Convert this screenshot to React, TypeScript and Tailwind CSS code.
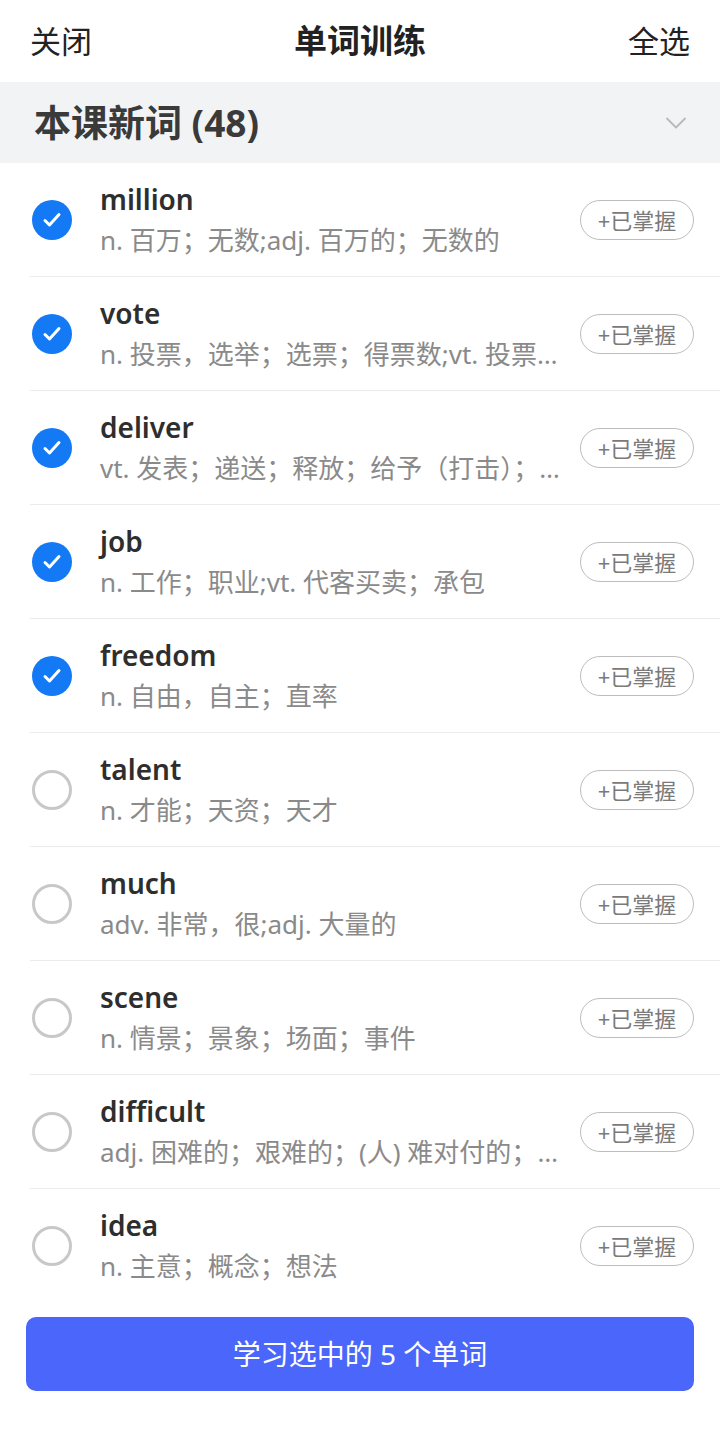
import { ChevronDown } from "lucide-react";

const words = [
  { word: "million", meaning: "n. 百万；无数;adj. 百万的；无数的", checked: true },
  { word: "vote", meaning: "n. 投票，选举；选票；得票数;vt. 投票决定；提议", checked: true },
  { word: "deliver", meaning: "vt. 发表；递送；释放；给予（打击）；接生", checked: true },
  { word: "job", meaning: "n. 工作；职业;vt. 代客买卖；承包", checked: true },
  { word: "freedom", meaning: "n. 自由，自主；直率", checked: true },
  { word: "talent", meaning: "n. 才能；天资；天才", checked: false },
  { word: "much", meaning: "adv. 非常，很;adj. 大量的", checked: false },
  { word: "scene", meaning: "n. 情景；景象；场面；事件", checked: false },
  { word: "difficult", meaning: "adj. 困难的；艰难的；(人) 难对付的；执拗的", checked: false },
  { word: "idea", meaning: "n. 主意；概念；想法", checked: false },
];

function CheckCircle({ checked }: { checked: boolean }) {
  if (!checked) {
    return <div className="w-10 h-10 rounded-full border-[3px] border-[#c8c8c8] shrink-0" />;
  }
  return (
    <div className="w-10 h-10 rounded-full bg-[#1479f5] flex items-center justify-center shrink-0">
      <svg width="24" height="24" viewBox="0 0 24 24" fill="none" stroke="white" strokeWidth="3" strokeLinecap="round" strokeLinejoin="round">
        <path d="M5 12.5l4.5 4.5L19 6.5" />
      </svg>
    </div>
  );
}

export default function App() {
  const selected = words.filter((w) => w.checked).length;

  return (
    <div
      className="w-[720px] h-[1430px] bg-white flex flex-col"
      style={{ fontFamily: '"Noto Sans", "Noto Sans CJK SC", sans-serif' }}
    >
      <div className="h-[82px] flex items-center justify-between px-[30px] text-[#222]">
        <span className="text-[31px]">关闭</span>
        <span className="text-[33px] font-bold">单词训练</span>
        <span className="text-[31px]">全选</span>
      </div>

      <div className="h-[81px] bg-[#f2f3f5] flex items-center justify-between pl-[34px] pr-[26px]">
        <span className="text-[37px] font-bold text-[#3a3a3a]">本课新词 (48)</span>
        <ChevronDown size={36} strokeWidth={1.2} className="text-[#b8b8b8]" />
      </div>

      <div className="flex flex-col">
        {words.map((w, i) => (
          <div key={w.word} className="flex items-center h-[114px] pl-[32px] pr-[26px] relative">
            <CheckCircle checked={w.checked} />
            <div className="flex-1 min-w-0 ml-[28px] mr-[12px] flex flex-col">
              <span className="text-[28px] font-semibold text-[#2e2e2e] leading-[34px]">{w.word}</span>
              <span className="text-[26px] text-[#8a8a8a] leading-[36px] mt-[6px] truncate">{w.meaning}</span>
            </div>
            <div className="w-[114px] h-[40px] rounded-full border border-[#bdbdbd] flex items-center justify-center text-[22px] leading-[26px] text-[#7a7a7a] shrink-0">
              +已掌握
            </div>
            {i < words.length - 1 && (
              <div className="absolute left-[30px] right-0 bottom-0 h-px bg-[#ececec]" />
            )}
          </div>
        ))}
      </div>

      <div className="px-[26px] pt-[14px]">
        <button className="w-full h-[74px] rounded-[10px] bg-[#4a66fb] text-white text-[28px]">
          学习选中的 {selected} 个单词
        </button>
      </div>
    </div>
  );
}
